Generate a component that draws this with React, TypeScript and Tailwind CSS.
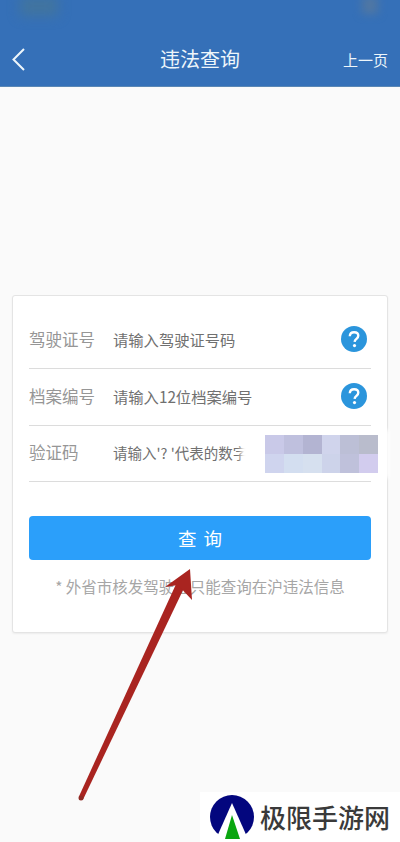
const FONT = '[font-family:"Noto_Sans_CJK_SC","Noto_Sans",sans-serif]'

const MOSAIC = [
  'bg-[#c9c9e8]', 'bg-[#bfc0de]', 'bg-[#b3b4d2]', 'bg-[#d0d4ec]', 'bg-[#bcbfd6]', 'bg-[#b9bccc]',
  'bg-[#cfd4ee]', 'bg-[#d3def0]', 'bg-[#d6e0ef]', 'bg-[#cdd3ea]', 'bg-[#bfc1db]', 'bg-[#d2ccee]',
]

function HelpIcon() {
  return (
    <svg className="w-[26px] h-[26px] shrink-0 mr-[4px]" viewBox="0 0 26 26">
      <circle cx="13" cy="13" r="13" fill="#2b95dc" />
      <path d="M8.8 10.2c.1-2.6 1.9-4 4.3-4 2.500 0 4.200 1.500 4.200 3.600 0 3-3.500 3-3.700 6" fill="none" stroke="#fff" strokeWidth="2.400" />
      <circle cx="13.500" cy="19.600" r="1.600" fill="#fff" />
    </svg>
  )
}

function Row({ label, hint, help, small, children }: { label: string; hint: string; help?: boolean; small?: boolean; children?: React.ReactNode }) {
  return (
    <div className={`relative flex items-center pb-[2px] border-b border-[#dcdcdc] ${small ? 'h-[56px]' : 'h-[57px]'}`}>
      <span className="w-[84px] shrink-0 text-[16.500px] text-[#969696]">{label}</span>
      <span className={`flex-1 text-[#707070] whitespace-nowrap overflow-hidden ${small ? 'text-[14.500px]' : 'text-[15.300px]'}`}>{hint}</span>
      {help && <HelpIcon />}
      {children}
    </div>
  )
}

export default function App() {
  return (
    <div className={`relative w-[400px] h-[842px] overflow-hidden bg-[#fafafa] ${FONT}`}>
      <header className="relative h-[87px] overflow-hidden bg-[#3570b8] border-b border-[#5a87b5] grid grid-cols-[1fr_auto_1fr] items-end px-[11px] pb-[14px] text-[#eef6fb]">
        {/* blurred status bar icons */}
        <div className="absolute left-[20px] -top-[4px] w-[38px] h-[20px] bg-[#41749f] blur-[6px]" />
        <div className="absolute left-[362px] -top-[4px] w-[16px] h-[18px] bg-[#5077a3] blur-[4px]" />
        <svg className="w-[16px] h-[24px] mb-[1px]" viewBox="0 0 16 24" fill="none">
          <path d="M13 2 2.500 12.500 13 23" stroke="#eef6fb" strokeWidth="2" />
        </svg>
        <h1 className="text-center text-[20px] leading-[26px]">违法查询</h1>
        <span className="justify-self-end text-[15px] leading-[24px] mr-[1px]">上一页</span>
      </header>

      <main className="mt-[208px] mx-[12px] h-[338px] bg-white border border-[#e4e4e4] rounded-[3px] shadow-[0_1px_2px_rgba(0,0,0,0.06)] px-[16px] pt-[16px]">
        <Row label="驾驶证号" hint="请输入驾驶证号码" help />
        <Row label="档案编号" hint="请输入12位档案编号" help />
        <Row label="验证码" hint="请输入'? '代表的数字" small>
          <div className="absolute left-[212px] top-[4px] w-[148px] h-[48px] bg-white blur-[2px]" />
          <div className="absolute left-[236px] top-[9px] w-[113px] h-[38px] grid grid-cols-6 grid-rows-2">
            {MOSAIC.map((c, i) => (
              <div key={i} className={c} />
            ))}
          </div>
        </Row>

        <button className="mt-[34px] w-full h-[44px] rounded-[4px] bg-[#2b9ffa] text-white text-[18.500px] leading-[26px] tracking-[7px] pl-[7px]">
          查询
        </button>
        <p className="mt-[16px] text-center text-[15.500px] leading-[20px] text-[#a6a6a6] whitespace-nowrap">
          * 外省市核发驾驶证只能查询在沪违法信息
        </p>
      </main>

      {/* red arrow drawn over the page */}
      <svg className="absolute left-0 top-0 w-[400px] h-[842px] pointer-events-none" viewBox="0 0 400 842">
        <path d="M78.700 796.900 177 582 185 586 83.300 799Z" fill="#a92420" />
        <circle cx="81" cy="798" r="2.500" fill="#8e2a24" />
        <path d="M190 569 165 587 178 585 192 600Z" fill="#a92420" />
      </svg>

      {/* site watermark */}
      <div className="absolute right-0 bottom-0 w-[200px] h-[50px] bg-white flex items-center pl-[10px] gap-[6px]">
        <svg className="w-[44px] h-[44px] shrink-0" viewBox="0 0 44 44">
          <circle cx="22" cy="22" r="22" fill="#03067e" />
          <path d="M22 8 38 44H6Z" fill="#fff" />
          <path d="M22 20 30 44H15Z" fill="#0aa60f" />
        </svg>
        <span className="text-[26px] leading-[40px] font-medium text-[#3a3a3a] whitespace-nowrap">极限手游网</span>
      </div>
    </div>
  )
}
